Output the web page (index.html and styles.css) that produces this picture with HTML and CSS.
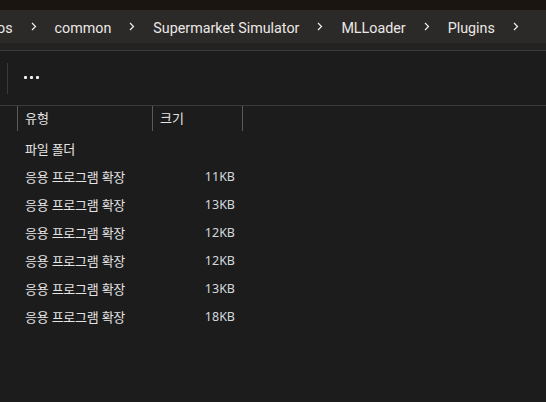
FILE: index.html
```html
<!DOCTYPE html>
<html lang="ko">
<head>
    <meta charset="UTF-8">
    <meta name="viewport" content="width=device-width, initial-scale=1.0">
    <title>Plugins</title>
    <link rel="stylesheet" href="styles.css">
</head>
<body>
    <div class="window-top"></div>

    <div class="address-bar">
        <div class="crumbs">
            <span class="crumb first">os</span>
            <svg class="chevron" viewBox="0 0 6 9"><path d="M1 1l3.5 3.5L1 8"/></svg>
            <span class="crumb">common</span>
            <svg class="chevron" viewBox="0 0 6 9"><path d="M1 1l3.5 3.5L1 8"/></svg>
            <span class="crumb">Supermarket Simulator</span>
            <svg class="chevron" viewBox="0 0 6 9"><path d="M1 1l3.5 3.5L1 8"/></svg>
            <span class="crumb">MLLoader</span>
            <svg class="chevron" viewBox="0 0 6 9"><path d="M1 1l3.5 3.5L1 8"/></svg>
            <span class="crumb">Plugins</span>
            <svg class="chevron" viewBox="0 0 6 9"><path d="M1 1l3.5 3.5L1 8"/></svg>
        </div>
    </div>
    <div class="address-bottom"></div>

    <div class="toolbar">
        <span class="toolbar-sep"></span>
        <span class="more">
            <i></i><i></i><i></i>
        </span>
    </div>

    <div class="columns">
        <div class="col col-name"></div>
        <div class="col col-type">유형</div>
        <div class="col col-size">크기</div>
    </div>

    <div class="rows">
        <div class="row"><span class="type">파일 폴더</span><span class="size"></span></div>
        <div class="row"><span class="type">응용 프로그램 확장</span><span class="size">11KB</span></div>
        <div class="row"><span class="type">응용 프로그램 확장</span><span class="size">13KB</span></div>
        <div class="row"><span class="type">응용 프로그램 확장</span><span class="size">12KB</span></div>
        <div class="row"><span class="type">응용 프로그램 확장</span><span class="size">12KB</span></div>
        <div class="row"><span class="type">응용 프로그램 확장</span><span class="size">13KB</span></div>
        <div class="row"><span class="type">응용 프로그램 확장</span><span class="size">18KB</span></div>
    </div>
</body>
</html>
```

FILE: styles.css
```css
html, body {
    margin: 0;
    padding: 0;
    height: 100%;
    overflow: hidden;
}
body {
    background-color: #1c1c1c;
    color: #e4e4e4;
    font-family: "Noto Sans", "Noto Sans CJK KR", sans-serif;
}
.window-top {
    height: 10px;
    background-color: #1b1511;
}
.address-bar {
    height: 33px;
    background-color: #2c2a28;
    display: flex;
    align-items: center;
    overflow: hidden;
}
.address-bottom {
    height: 7px;
    background-color: #242220;
    border-bottom: 1px solid #3a3a3a;
}
.crumbs {
    display: flex;
    align-items: center;
    gap: 18px;
    padding-top: 3px;
    font-family: Roboto, "Noto Sans", sans-serif;
    font-size: 14.3px;
    color: #ebe8e6;
    white-space: nowrap;
}
.crumb.first {
    margin-left: -3px; /* cut by the window edge */
}
.chevron {
    width: 6px;
    height: 9px;
    margin-top: -3px;
    fill: none;
    stroke: #f0f0f0;
    stroke-width: 1.2;
}
.toolbar {
    height: 54px;
    display: flex;
    align-items: center;
    border-bottom: 1px solid #3b3b3b;
}
.toolbar-sep {
    width: 1px;
    height: 31px;
    background-color: #3a3a3a;
    margin-left: 7px;
}
.more {
    display: flex;
    gap: 3px;
    margin-left: 16px;
    margin-top: -1px;
}
.more i {
    width: 3px;
    height: 3px;
    border-radius: 1px;
    background-color: #f2f2f2;
}
.columns {
    display: flex;
    height: 25px;
    font-family: "Noto Sans CJK KR", sans-serif;
    font-size: 13px;
}
.col {
    border-right: 1px solid #5a5a5a;
    padding-left: 7px;
    line-height: 24px;
    box-sizing: border-box;
}
.col-name {
    width: 18px;
    padding-left: 0;
}
.col-type {
    width: 135px;
}
.col-size {
    width: 90px;
}
.rows {
    margin-top: 3px;
    font-family: "Noto Sans CJK KR", sans-serif;
    font-size: 13px;
}
.row {
    display: flex;
    height: 28px;
    align-items: center;
}
.type {
    width: 175px;
    padding-left: 25px;
    letter-spacing: -0.3px;
}
.size {
    width: 35px;
    text-align: right;
    font-family: "Noto Sans", sans-serif;
    font-size: 12.5px;
    color: #d4d8dc;
}
```
